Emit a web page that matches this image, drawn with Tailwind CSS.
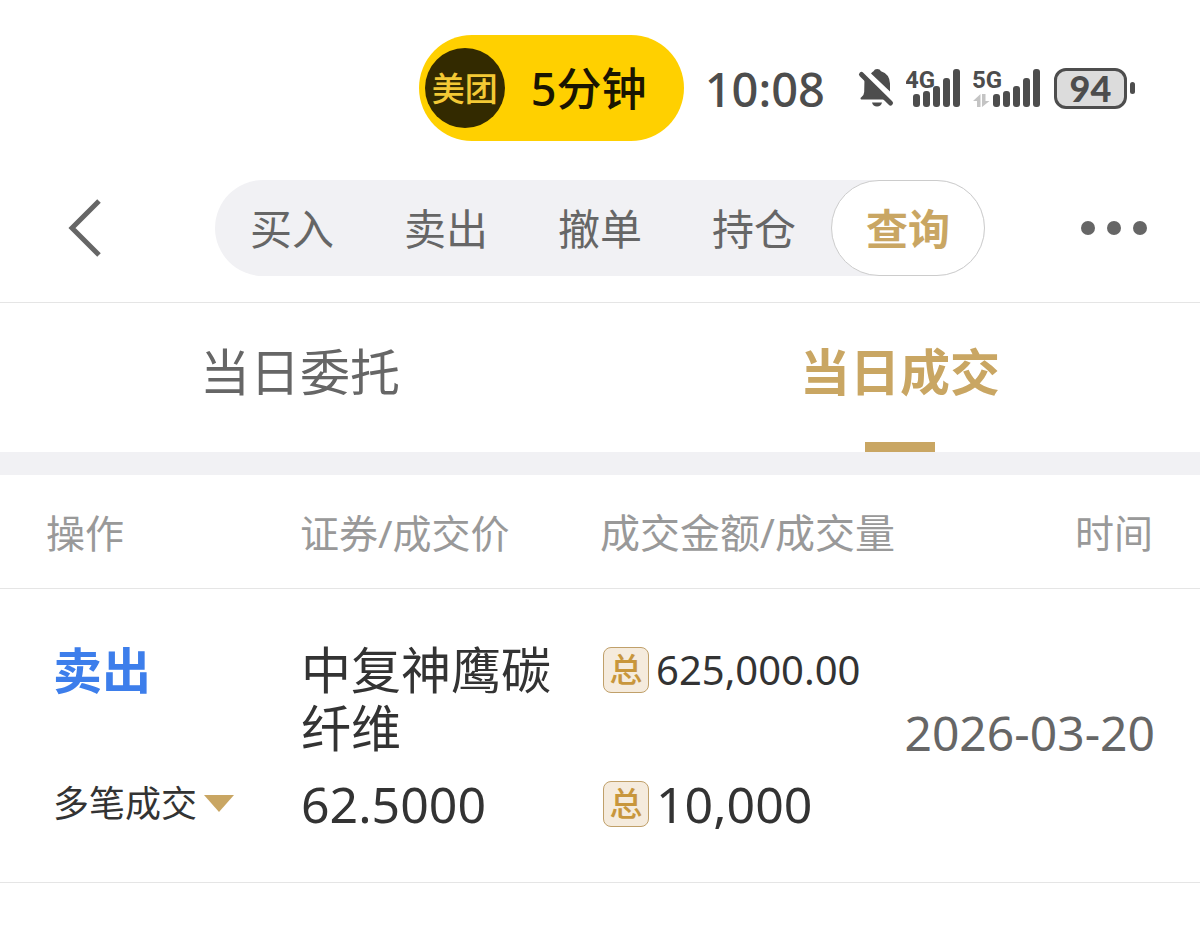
<!DOCTYPE html>
<html lang="zh-CN">
<head>
<meta charset="utf-8">
<meta name="viewport" content="width=device-width, initial-scale=1">
<title>当日成交</title>
<script src="https://cdn.jsdelivr.net/npm/@tailwindcss/browser@4"></script>
</head>
<body class="bg-white font-['Noto_Sans','Noto_Sans_CJK_SC',sans-serif] text-[#333333]">

<!-- Status bar -->
<header class="flex items-center justify-end pt-[35px] pr-[65px] text-[#4d4d4d]">
  <div class="flex h-[106px] w-[265px] items-center rounded-full bg-[#ffd000] pl-[6px]">
    <span class="flex size-20 items-center justify-center rounded-full bg-[#332a00] text-[33px] leading-none font-medium text-[#f3c935]">美团</span>
    <span class="ml-[26px] text-[45px] leading-none font-medium text-[#1a1500]">5分钟</span>
  </div>
  <time class="ml-[21px] pt-[2px] text-[47px] leading-[48px] font-medium">10:08</time>
  <svg class="ml-[32px] h-[44px] w-[42px]" viewBox="0 0 42 44" fill="#4d4d4d" role="img" aria-label="静音">
    <path d="M14 7.500Q15 6 16.500 5.300Q17.500 3 20.200 3Q23 3 24 5.300Q32.500 8 33 17.500V25.500Z"/>
    <path d="M7.500 12L29 33.500H4.500Q3.500 33.500 3.500 32.500Q3.500 31.800 4.300 31.200Q7 29.500 7.200 26Z"/>
    <path d="M4.500 8.500L33.500 37" stroke="#4d4d4d" stroke-width="5" stroke-linecap="round"/>
    <path d="M15 36.500H25Q24 40.500 20 40.500Q16 40.500 15 36.500Z"/>
  </svg>
  <svg class="ml-[7px] h-[44px] w-[56px]" viewBox="0 0 56 44" fill="#4d4d4d" role="img" aria-label="4G 信号">
    <text x="-1" y="22" font-family="Roboto,sans-serif" font-weight="700" font-size="24">4G</text>
    <rect x="7" y="28" width="7" height="13" rx="3"/><rect x="17" y="25" width="7" height="16" rx="3"/><rect x="27" y="20" width="7" height="21" rx="3"/><rect x="37" y="12" width="7" height="29" rx="3"/><rect x="47" y="3" width="7" height="38" rx="3"/>
  </svg>
  <svg class="ml-[11px] h-[44px] w-[70px]" viewBox="0 0 70 44" fill="#4d4d4d" role="img" aria-label="5G 信号">
    <text x="-1" y="22" font-family="Roboto,sans-serif" font-weight="700" font-size="24">5G</text>
    <path d="M7.500 28V41H4V35H0ZM9 28H12.500V35H16.500L9 41Z" fill="#c4c4c4"/>
    <rect x="20" y="28" width="7" height="13" rx="3"/><rect x="30" y="25" width="7" height="16" rx="3"/><rect x="40" y="20" width="7" height="21" rx="3"/><rect x="50" y="12" width="7" height="29" rx="3"/><rect x="60" y="3" width="7" height="38" rx="3"/>
  </svg>
  <div class="ml-[11px] flex items-center gap-[3px]">
    <span class="flex h-[41px] w-[73px] items-center justify-center rounded-[12px] border-[3px] border-[#4d4d4d] bg-[#dcdcdc] font-[Lato] text-[36px] leading-none font-black">94</span>
    <span class="h-[12px] w-[5px] rounded-full bg-[#4d4d4d]"></span>
  </div>
</header>

<!-- Navigation -->
<nav class="mt-[39px] flex items-center justify-between border-b border-[#e5e5e5] pr-[52px] pb-[26px] pl-[68px]">
  <button type="button" aria-label="返回" class="w-[147px]">
    <svg class="h-[60px] w-[34px]" viewBox="0 0 34 60" fill="none" stroke="#666666" stroke-width="5"><path d="M31 3L4 30L31 57"/></svg>
  </button>
  <div class="grid h-24 w-[770px] grid-cols-5 rounded-full bg-[#f1f1f4] text-[42px] leading-none text-[#666666]">
    <button type="button" class="pt-[2px]">买入</button>
    <button type="button" class="pt-[2px]">卖出</button>
    <button type="button" class="pt-[2px]">撤单</button>
    <button type="button" class="pt-[2px]">持仓</button>
    <button type="button" aria-current="page" class="rounded-full border border-[#cccccc] bg-white pt-[2px] font-bold text-[#c9a663]">查询</button>
  </div>
  <button type="button" aria-label="更多" class="flex w-[163px] justify-end">
    <svg class="h-4 w-[72px]" viewBox="0 0 72 16" fill="#666666"><circle cx="12" cy="8" r="7"/><circle cx="38" cy="8" r="7"/><circle cx="64" cy="8" r="7"/></svg>
  </button>
</nav>

<!-- Tabs -->
<div role="tablist" class="grid h-[172px] grid-cols-2 border-b-[23px] border-[#f1f1f4] text-[50px] leading-[60px]">
  <button type="button" role="tab" aria-selected="false" class="flex flex-col items-center pt-[39px] text-[#666666]">当日委托</button>
  <button type="button" role="tab" aria-selected="true" class="flex flex-col items-center justify-between pt-[39px] font-bold text-[#c9a663]">当日成交<span class="h-[10px] w-[70px] bg-[#c9a663]"></span></button>
</div>

<!-- Trades -->
<table class="w-full table-fixed text-left">
  <thead>
    <tr class="h-[113px] border-b border-[#e5e5e5] text-[39px] leading-[48px] whitespace-nowrap text-[#999999]">
      <th scope="col" class="w-1/4 pt-[4px] pl-[46px] font-normal">操作</th>
      <th scope="col" class="w-1/4 pt-[4px] font-normal">证券/成交价</th>
      <th scope="col" class="w-1/4 pt-[4px] text-[40px] font-normal">成交金额/成交量</th>
      <th scope="col" class="w-1/4 pt-[4px] pr-[47px] text-right font-normal">时间</th>
    </tr>
  </thead>
  <tbody>
    <tr class="border-b border-[#e5e5e5] align-top leading-[58px]">
      <td class="pt-[52px] pl-[53px]">
        <div class="flex flex-col gap-[76px]">
          <span class="text-[49px] font-bold text-[#3d7eeb]">卖出</span>
          <button type="button" class="flex items-center gap-[7px] text-[36px] whitespace-nowrap">多笔成交<svg class="h-[17px] w-[30px]" viewBox="0 0 30 17" fill="#c9a663"><path d="M0 0H30L15 17Z"/></svg></button>
        </div>
      </td>
      <td class="pt-[52px] pr-6 pb-[49px] pl-[1px]">
        <div class="flex flex-col gap-[18px] text-[50px]">
          <span>中复神鹰碳纤维</span>
          <span>62.5000</span>
        </div>
      </td>
      <td class="pt-[52px] pl-[3px]">
        <div class="flex flex-col gap-[76px]">
          <span class="flex items-center gap-[7px] text-[40px]"><span class="flex size-[46px] items-center justify-center rounded-[8px] border border-[#c0a06a] bg-[#f5ebdd] text-[33px] leading-none font-medium text-[#c8963c]">总</span>625,000.00</span>
          <span class="flex items-center gap-[7px] text-[50px]"><span class="flex size-[46px] items-center justify-center rounded-[8px] border border-[#c0a06a] bg-[#f5ebdd] text-[33px] leading-none font-medium text-[#c8963c]">总</span>10,000</span>
        </div>
      </td>
      <td class="pr-[45px] pb-[4px] text-right align-middle text-[48px] whitespace-nowrap text-[#666666]">2026-03-20</td>
    </tr>
  </tbody>
</table>

</body>
</html>
